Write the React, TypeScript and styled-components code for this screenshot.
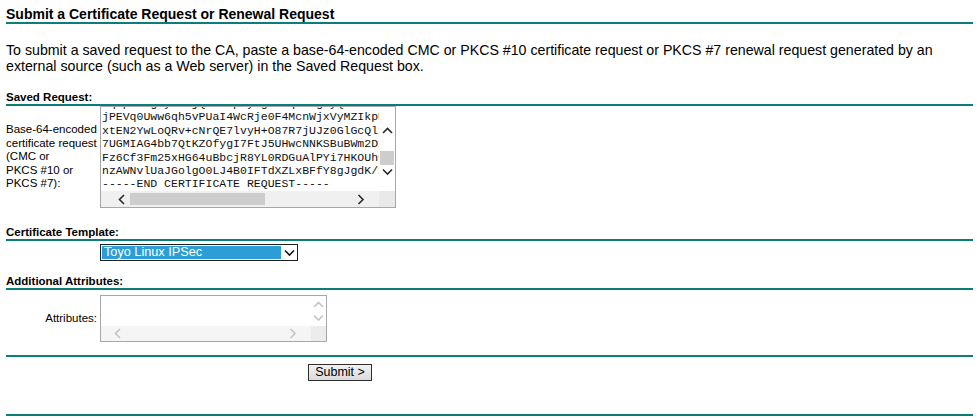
import React from "react";
import styled, { createGlobalStyle } from "styled-components";

const teal = "#0b7d7a";

const GlobalStyle = createGlobalStyle`
  html, body {
    margin: 0;
    padding: 0;
    background: #fff;
  }
  body {
    font-family: "Liberation Sans", Arial, sans-serif;
    color: #000;
  }
`;

const Page = styled.div`
  padding: 0 7px 0 6px;
`;

const Title = styled.h1`
  margin: 0;
  padding-top: 6px;
  font-size: 14px;
  line-height: 16px;
  font-weight: bold;
  border-bottom: 2px solid ${teal};
`;

const Intro = styled.p`
  margin: 18px 0 0;
  font-size: 14.2px;
  line-height: 16px;
`;

const SectionHead = styled.h2<{ $gap: number }>`
  margin: ${(p) => p.$gap}px 0 0;
  font-size: 11.5px;
  line-height: 14px;
  font-weight: bold;
  border-bottom: 2px solid ${teal};
`;

const Rule = styled.hr<{ $gap: number }>`
  margin: ${(p) => p.$gap}px 0 0;
  border: 0;
  border-top: 2px solid ${teal};
  height: 0;
`;

const FieldRow = styled.div<{ $gap: number }>`
  display: grid;
  grid-template-columns: 94px auto;
  align-items: center;
  justify-content: start;
  margin-top: ${(p) => p.$gap}px;
`;

const Label = styled.div<{ $align?: "left" | "right" }>`
  font-size: 11.5px;
  line-height: 13.5px;
  text-align: ${(p) => p.$align || "left"};
  padding-right: ${(p) => (p.$align === "right" ? "3px" : "0")};
`;

/* fake multi-line text box with classic scrollbars */
const TextBox = styled.div<{ $w: number; $h: number; $bar: number }>`
  box-sizing: border-box;
  width: ${(p) => p.$w}px;
  height: ${(p) => p.$h}px;
  border: 1px solid #a7a7a7;
  display: grid;
  grid-template-columns: 1fr ${(p) => p.$bar}px;
  grid-template-rows: 1fr ${(p) => p.$bar}px;
  background: #fff;
`;

const Viewport = styled.div`
  overflow: hidden;
  padding-left: 1px;
`;

const Code = styled.pre`
  margin: -10px 0 0;
  font-family: "Liberation Mono", "Courier New", monospace;
  font-size: 11.5px;
  line-height: 13.4px;
  color: #111;
  white-space: pre;
`;

const VBar = styled.div<{ $top: number; $gap: number }>`
  display: flex;
  flex-direction: column;
  align-items: center;
  padding-top: ${(p) => p.$top}px;
  gap: ${(p) => p.$gap}px;
`;

const HBar = styled.div<{ $left: number; $right: number; $bg: string }>`
  display: flex;
  align-items: center;
  background: ${(p) => p.$bg};
  padding: 0 ${(p) => p.$right}px 0 ${(p) => p.$left}px;
`;

const Corner = styled.div<{ $bg: string }>`
  background: ${(p) => p.$bg};
`;

const ArrowBox = styled.div<{ $w: number; $h: number; $color: string }>`
  width: ${(p) => p.$w}px;
  height: ${(p) => p.$h}px;
  display: flex;
  align-items: center;
  justify-content: center;
  color: ${(p) => p.$color};
  flex: none;
`;

const VThumb = styled.div`
  width: 14px;
  height: 14px;
  background: #cdcdcd;
  margin-top: 13px;
`;

const HThumb = styled.div`
  width: 135px;
  height: 12px;
  background: #cdcdcd;
  flex: none;
`;

const Spacer = styled.div`
  flex: 1;
`;

const SelectBox = styled.div`
  box-sizing: border-box;
  width: 198px;
  height: 17px;
  border: 1px solid #1e1e1e;
  padding: 1px 0 1px 1px;
  display: flex;
  background: #fff;
`;

const SelectedOption = styled.div`
  flex: 1;
  background: #2b9ed8;
  color: #fff;
  font-size: 12.7px;
  line-height: 13px;
  padding-left: 2px;
  white-space: nowrap;
  overflow: hidden;
`;

const SubmitRow = styled.div`
  margin-top: 5px;
  padding-left: 302px;
`;

const SubmitButton = styled.button`
  box-sizing: border-box;
  width: 64px;
  height: 17px;
  padding: 0;
  border: 1px solid #2e2e2e;
  background: linear-gradient(#f2f2f2, #dadada);
  font-family: "Liberation Sans", Arial, sans-serif;
  font-size: 12.5px;
  line-height: 14px;
  color: #000;
`;

type Dir = "up" | "down" | "left" | "right";

const points: Record<Dir, string> = {
  up: "1,6 5.5,1.5 10,6",
  down: "1,1.5 5.5,6 10,1.5",
  left: "6,1 1.5,5.5 6,10",
  right: "1.5,1 6,5.5 1.5,10",
};

const Chevron: React.FC<{ dir: Dir }> = ({ dir }) => {
  const vertical = dir === "up" || dir === "down";
  return (
    <svg
      width={vertical ? 11 : 8}
      height={vertical ? 8 : 11}
      viewBox={vertical ? "0 0 11 8" : "0 0 8 11"}
    >
      <polyline points={points[dir]} fill="none" stroke="currentColor" strokeWidth="1.6" />
    </svg>
  );
};

const csr = [
  "Oq8pTZ3gYyLm0jQk2wRpHyVg7sNq1xJgPyQ4tUaB9",
  "jPEVq0Uww6qh5vPUaI4WcRje0F4McnWjxVyMZIkpU",
  "xtEN2YwLoQRv+cNrQE7lvyH+O87R7jUJz0GlGcQl1",
  "7UGMIAG4bb7QtKZOfygI7FtJ5UHwcNNKSBuBWm2Dx",
  "Fz6Cf3Fm25xHG64uBbcjR8YL0RDGuAlPYi7HKOUh9",
  "nzAWNvlUaJGolgO0LJ4B0IFTdXZLxBFfY8gJgdK/z",
  "-----END CERTIFICATE REQUEST-----",
].join("\n");

export default function App() {
  return (
    <Page>
      <GlobalStyle />
      <Title>Submit a Certificate Request or Renewal Request</Title>
      <Intro>
        To submit a saved request to the CA, paste a base-64-encoded CMC or PKCS #10 certificate
        request or PKCS #7 renewal request generated by an external source (such as a Web server)
        in the Saved Request box.
      </Intro>

      <SectionHead $gap={16}>Saved Request:</SectionHead>
      <FieldRow $gap={0}>
        <Label>
          Base-64-encoded
          <br />
          certificate request
          <br />
          (CMC or
          <br />
          PKCS #10 or
          <br />
          PKCS #7):
        </Label>
        <TextBox $w={296} $h={102} $bar={16}>
          <Viewport>
            <Code>{csr}</Code>
          </Viewport>
          <VBar $top={17} $gap={0}>
            <ArrowBox $w={16} $h={14} $color="#2a2a2a">
              <Chevron dir="up" />
            </ArrowBox>
            <VThumb />
            <ArrowBox $w={16} $h={14} $color="#2a2a2a">
              <Chevron dir="down" />
            </ArrowBox>
          </VBar>
          <HBar $left={13} $right={10} $bg="#f0f0f0">
            <ArrowBox $w={16} $h={16} $color="#2a2a2a">
              <Chevron dir="left" />
            </ArrowBox>
            <HThumb />
            <Spacer />
            <ArrowBox $w={16} $h={16} $color="#2a2a2a">
              <Chevron dir="right" />
            </ArrowBox>
          </HBar>
          <Corner $bg="#e9e9e9" />
        </TextBox>
      </FieldRow>

      <SectionHead $gap={17}>Certificate Template:</SectionHead>
      <FieldRow $gap={3}>
        <Label />
        <SelectBox>
          <SelectedOption>Toyo Linux IPSec</SelectedOption>
          <ArrowBox $w={16} $h={13} $color="#111">
            <Chevron dir="down" />
          </ArrowBox>
        </SelectBox>
      </FieldRow>

      <SectionHead $gap={13}>Additional Attributes:</SectionHead>
      <FieldRow $gap={5}>
        <Label $align="right">Attributes:</Label>
        <TextBox $w={227} $h={47} $bar={15}>
          <Viewport />
          <VBar $top={3} $gap={2}>
            <ArrowBox $w={15} $h={11} $color="#c4c4c4">
              <Chevron dir="up" />
            </ArrowBox>
            <ArrowBox $w={15} $h={11} $color="#c4c4c4">
              <Chevron dir="down" />
            </ArrowBox>
          </VBar>
          <HBar $left={9} $right={10} $bg="#f5f5f5">
            <ArrowBox $w={16} $h={15} $color="#c4c4c4">
              <Chevron dir="left" />
            </ArrowBox>
            <Spacer />
            <ArrowBox $w={16} $h={15} $color="#c4c4c4">
              <Chevron dir="right" />
            </ArrowBox>
          </HBar>
          <Corner $bg="#ececec" />
        </TextBox>
      </FieldRow>

      <Rule $gap={13} />
      <SubmitRow>
        <SubmitButton type="submit">Submit &gt;</SubmitButton>
      </SubmitRow>
      <Rule $gap={33} />
    </Page>
  );
}
